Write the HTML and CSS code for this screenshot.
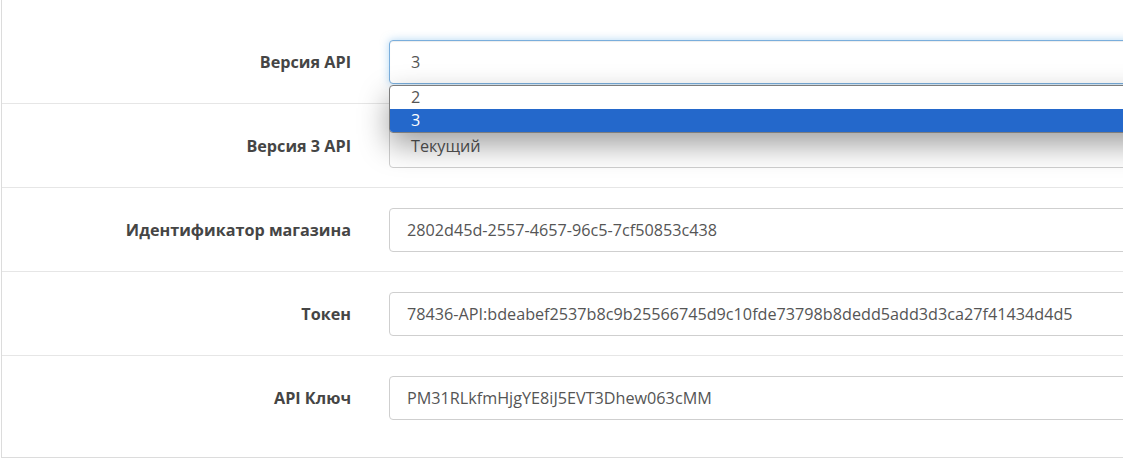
FILE: index.html
```html
<!DOCTYPE html>
<html lang="ru">
<head>
<meta charset="utf-8">
<title>Настройки API</title>
<link rel="stylesheet" href="styles.css">
</head>
<body>
<div class="panel">
  <div class="form-group">
    <label class="control-label">Версия API</label>
    <div class="field">
      <div class="form-control select focused">3</div>
      <ul class="dropdown">
        <li class="option">2</li>
        <li class="option selected">3</li>
      </ul>
    </div>
  </div>
  <div class="form-group">
    <label class="control-label">Версия 3 API</label>
    <div class="field">
      <div class="form-control select">Текущий</div>
    </div>
  </div>
  <div class="form-group">
    <label class="control-label">Идентификатор магазина</label>
    <div class="field">
      <div class="form-control">2802d45d-2557-4657-96c5-7cf50853c438</div>
    </div>
  </div>
  <div class="form-group">
    <label class="control-label">Токен</label>
    <div class="field">
      <div class="form-control">78436-API:bdeabef2537b8c9b25566745d9c10fde73798b8dedd5add3d3ca27f41434d4d5</div>
    </div>
  </div>
  <div class="form-group last">
    <label class="control-label">API Ключ</label>
    <div class="field">
      <div class="form-control">PM31RLkfmHjgYE8iJ5EVT3Dhew063cMM</div>
    </div>
  </div>
</div>
</body>
</html>
```
FILE: styles.css
```css
html, body {
  margin: 0;
  padding: 0;
  background: #fff;
  overflow: hidden;
}
body {
  font-family: "Open Sans", "Liberation Sans", sans-serif;
  color: #555;
}
.panel {
  margin-left: 1px;
  border-left: 1px solid #dcdcdc;
  border-bottom: 1px solid #dcdcdc;
  padding-top: 20px;
  padding-bottom: 18px;
}
.form-group {
  display: flex;
  align-items: center;
  gap: 38px;
  padding: 20px 0 19px;
  border-top: 1px solid #e6e6e6;
}
.form-group:first-child {
  border-top: none;
}
.control-label {
  flex: 0 0 349px;
  text-align: right;
  font-weight: 700;
  font-size: 16.2px;
  color: #454545;
}
.field {
  position: relative;
  flex: 0 0 900px;
}
.form-control {
  box-sizing: border-box;
  height: 44px;
  line-height: 42px;
  padding: 0 17px;
  border: 1px solid #cfcfcf;
  border-radius: 4px;
  font-size: 16.2px;
  color: #555;
  background: #fff;
  white-space: nowrap;
}
.select {
  padding-left: 21px;
}
.focused {
  border-color: #7aaedc;
  box-shadow: inset 0 1px 1px rgba(0,0,0,.075), 0 0 8px rgba(102,175,233,.5);
}
.dropdown {
  position: absolute;
  left: 0;
  right: 0;
  top: 45px;
  margin: 0;
  padding: 0;
  list-style: none;
  background: #fff;
  border: 1px solid #7d7d7d;
  border-radius: 4px;
  box-shadow: 0 12px 30px rgba(0,0,0,.38);
  z-index: 5;
  overflow: hidden;
}
.option {
  height: 23px;
  line-height: 22px;
  padding-left: 21px;
  font-size: 16.2px;
  color: #555;
}
.option.selected {
  background: #2468cb;
  color: #fff;
}
```
